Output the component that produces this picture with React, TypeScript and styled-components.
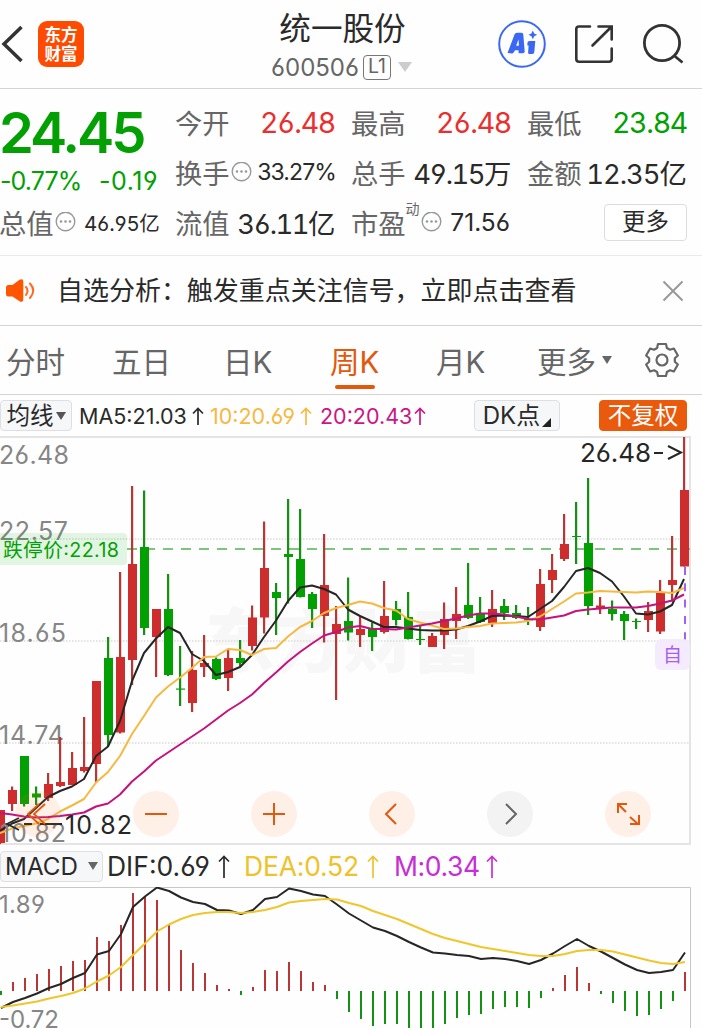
import React from 'react';
import styled, { createGlobalStyle } from 'styled-components';

const RED = '#cd2d2d';
const GREEN = '#03a003';
const ORANGE = '#e2590d';
const FONT = `Inter, "Noto Sans CJK SC", sans-serif`;

const GlobalStyle = createGlobalStyle`
  * { box-sizing: border-box; }
  body {
    margin: 0;
    background: #fff;
    font-family: ${FONT};
    font-feature-settings: "cv03", "cv04";
    color: #2a2a2a;
    overflow: hidden;
  }
`;

const Screen = styled.main`
  width: 702px;
  height: 1028px;
  overflow: hidden;
  background: #fefefe;
  display: flex;
  flex-direction: column;
`;

/* ---------- header ---------- */
const Header = styled.header`
  height: 89px;
  flex: none;
  display: grid;
  grid-template-columns: 240px 1fr 240px;
  border-bottom: 1px solid #d4d4d4;
`;
const HeaderLeft = styled.div`
  display: flex;
  align-items: center;
  gap: 13px;
  padding-left: 1px;
`;
const AppLogo = styled.div`
  width: 46px;
  height: 46px;
  border-radius: 9px;
  background: #ff4b02;
  color: #fff;
  font: 700 16.5px/19px "Noto Sans CJK SC", sans-serif;
  text-align: center;
  padding-top: 4px;
`;
const HeaderTitle = styled.div`
  display: flex;
  flex-direction: column;
  align-items: center;
  padding: 9px 17px 0 0;
`;
const StockName = styled.h1`
  margin: 0;
  font-size: 31.6px;
  line-height: 40px;
  font-weight: 400;
  white-space: nowrap;
`;
const CodeRow = styled.div`
  display: flex;
  align-items: center;
  height: 36px;
  margin-right: 2px;
  color: #666;
  font-size: 24px;
`;
const LevelTag = styled.span`
  width: 28px;
  height: 25px;
  margin: 0 7px 0 4px;
  border: 1.5px solid #777;
  border-radius: 4px;
  font-size: 19.5px;
  line-height: 21px;
  text-align: center;
`;
const Caret = styled.i<{ $w: number; $h: number; $color: string; $gap?: number }>`
  width: 0;
  height: 0;
  margin-left: ${p => p.$gap ?? 0}px;
  border-left: ${p => p.$w / 2}px solid transparent;
  border-right: ${p => p.$w / 2}px solid transparent;
  border-top: ${p => p.$h}px solid ${p => p.$color};
`;
const HeaderActions = styled.div`
  display: flex;
  align-items: center;
  justify-content: flex-end;
  gap: 28px;
  padding-right: 18px;
`;

/* ---------- quote ---------- */
const Quote = styled.section`
  height: 167px;
  flex: none;
  display: grid;
  grid-template-columns: 158px 158px 158px 158px;
  grid-template-rows: 50px 50px 50px;
  column-gap: 18px;
  padding-top: 8px;
  border-bottom: 1px solid #e9e9e9;
`;
const PriceBlock = styled.div`
  grid-row: span 2;
  color: ${GREEN};
`;
const Price = styled.div`
  font-size: 56px;
  line-height: 68px;
  font-weight: 600;
  letter-spacing: -3.1px;
  margin: 2px 0 0 -1px;
`;
const Change = styled.div`
  display: flex;
  justify-content: space-between;
  font-size: 25px;
  line-height: 28px;
  letter-spacing: -0.9px;
`;
const ChangeValue = styled.span`
  letter-spacing: 0.5px;
`;
const Cell = styled.div`
  display: flex;
  align-items: center;
  justify-content: space-between;
  white-space: nowrap;
`;
const Label = styled.span`
  display: flex;
  align-items: center;
  margin-left: -1px;
  font-size: 27.3px;
  color: #666;
`;
const Sup = styled.sup`
  font-size: 14px;
  line-height: 14px;
  align-self: flex-start;
`;
const Value = styled.span<{ $size?: number; $color?: string; $ls?: number; $shift?: number; $prop?: boolean }>`
  font-size: ${p => p.$size ?? 28.5}px;
  font-variant-numeric: ${p => (p.$prop ? 'normal' : 'tabular-nums')};
  color: ${p => p.$color ?? '#2a2a2a'};
  letter-spacing: ${p => p.$ls ?? -1.3}px;
  margin-right: ${p => p.$shift ?? -1}px;
`;
const MoreButton = styled.button`
  justify-self: end;
  align-self: center;
  width: 83px;
  height: 37px;
  margin-right: -1px;
  padding: 0 0 2px;
  border: 1px solid #ddd;
  border-radius: 4px;
  background: #fff;
  font: 400 23.5px/33px ${FONT};
  color: #2a2a2a;
`;

/* ---------- notice ---------- */
const Notice = styled.section`
  height: 70px;
  flex: none;
  display: flex;
  align-items: center;
  border-bottom: 1px solid #d4d4d4;
  padding: 0 18px 0 5px;
`;
const NoticeText = styled.p`
  flex: 1;
  margin: 0 0 0 21px;
  font-size: 25.98px;
  line-height: 36px;
  white-space: nowrap;
`;

/* ---------- period tabs ---------- */
const Tabs = styled.nav`
  height: 69px;
  flex: none;
  display: flex;
  align-items: center;
  border-bottom: 1px solid #d4d4d4;
  padding-left: 6px;
`;
const Tab = styled.div<{ $active?: boolean; $w: number }>`
  position: relative;
  width: ${p => p.$w}px;
  height: 68px;
  display: flex;
  align-items: center;
  font-size: 29.5px;
  padding-bottom: 1px;
  color: ${p => (p.$active ? ORANGE : '#666')};
  white-space: nowrap;
`;
const TabBar = styled.span`
  position: absolute;
  left: 5px;
  bottom: 5px;
  width: 40px;
  height: 4px;
  border-radius: 2px;
  background: ${ORANGE};
`;

/* ---------- indicator bars ---------- */
const IndicatorBar = styled.div<{ $h: number }>`
  height: ${p => p.$h}px;
  flex: none;
  display: flex;
  align-items: center;
  white-space: nowrap;
`;
const Chip = styled.span<{ $w: number; $size: number; $solid?: boolean; $before?: number; $after?: number }>`
  width: ${p => p.$w}px;
  height: 31px;
  margin: 0 ${p => p.$after ?? 0}px 0 ${p => p.$before ?? 0}px;
  display: flex;
  align-items: center;
  justify-content: center;
  gap: 2px;
  border-radius: 4px;
  border: 1px solid ${p => (p.$solid ? '#ea5a0c' : '#dedfe3')};
  background: ${p => (p.$solid ? '#ea5a0c' : '#f6f7f9')};
  color: ${p => (p.$solid ? '#fff' : '#2a2a2a')};
  font-size: ${p => p.$size}px;
  line-height: 29px;
`;
const Reading = styled.span<{ $color: string; $size: number; $w: number; $ls?: number; $gap?: number }>`
  width: ${p => p.$w}px;
  display: flex;
  align-items: center;
  gap: ${p => p.$gap ?? 5}px;
  color: ${p => p.$color};
  font-size: ${p => p.$size}px;
  letter-spacing: ${p => p.$ls ?? 0}px;
`;

/* ---------- charts ---------- */
const KPanel = styled.section`
  position: relative;
  width: 702px;
  height: 409px;
  flex: none;
`;
const MacdPanel = styled.section`
  width: 702px;
  height: 141px;
  flex: none;
`;
const ChartSvg = styled.svg`
  display: block;
  font-family: ${FONT};
`;
const ChartControls = styled.div`
  position: absolute;
  left: 133px;
  top: 355px;
  display: flex;
  gap: 72px;
`;
const RoundButton = styled.span<{ $muted?: boolean }>`
  width: 46px;
  height: 46px;
  border-radius: 50%;
  background: ${p => (p.$muted ? '#f3f3f3' : 'rgba(255, 107, 30, 0.1)')};
  color: ${p => (p.$muted ? '#666' : ORANGE)};
`;

/* ---------- icons ---------- */
const BackIcon = () => (
  <svg width="24" height="40" viewBox="0 0 24 40" fill="none" stroke="#333" strokeWidth="3.500">
    <path d="M20.500 3L3 20L20.500 37" />
  </svg>
);
const AiIcon = () => (
  <svg width="48" height="48" viewBox="0 0 48 48">
    <circle cx="24" cy="24" r="22.800" fill="none" stroke="#3b68f3" strokeWidth="2" />
    <g fill="#3b68f3">
      <path fillRule="evenodd" d="M9.500 33Q13.500 22.500 16.500 14.500Q17 12.800 19 12.800H23.500Q25.200 12.800 25.300 14.500L26.700 31.500Q26.700 33.300 25 33.300H21.500Q20.500 33.300 20.500 32V30.300H17L15.500 32.800Q15 33.500 14 33.500ZM20.500 19.300L18.200 25.700H20.900Z" />
      <path d="M31.500 21H37.300L36.300 32Q36 34 34.500 34H31.500Q30 34 30.100 32.500L30.600 25.500H29.300L29.500 22.500Q29.700 21 31.500 21Z" />
      <path d="M34.800 10.500L36.200 13.600L39.200 14.800L36.200 16.200L34.800 19.200L33.400 16.200L30.500 14.800L33.400 13.600Z" />
    </g>
  </svg>
);
const ShareIcon = () => (
  <svg width="40" height="40" viewBox="0 0 40 40" fill="none" stroke="#333" strokeWidth="2.600" strokeLinecap="round">
    <path d="M16 2.500H5Q2.300 2.500 2.300 5V35Q2.300 37.700 5 37.700H35Q37.700 37.700 37.700 35V24.500" />
    <path d="M24.500 2.500H37.700V15.500M37.200 3L18.500 21.500" />
  </svg>
);
const SearchIcon = () => (
  <svg width="42" height="42" viewBox="0 0 42 42" fill="none" stroke="#333" strokeWidth="2.800">
    <circle cx="20" cy="20" r="17.600" />
    <path d="M32 32.500L40.500 39.500" />
  </svg>
);
const InfoDots = () => (
  <svg width="22" height="21" viewBox="-1 0 22 21">
    <circle cx="10.500" cy="9.500" r="9.300" fill="none" stroke="#999" strokeWidth="1.400" />
    <g fill="#999">
      <circle cx="6" cy="9.500" r="1.300" />
      <circle cx="10.500" cy="9.500" r="1.300" />
      <circle cx="15" cy="9.500" r="1.300" />
    </g>
  </svg>
);
const SpeakerIcon = () => (
  <svg width="31" height="26" viewBox="0 0 31 26">
    <path fill="#ff5500" d="M3 7H7.500L14.500 1.800Q18.300 0 18.300 3.500V21.500Q18.300 25 14.500 23.200L7.500 18.500H3Q1 18.500 1 16V9.500Q1 7 3 7Z" />
    <g fill="none" stroke="#ff6a20" strokeWidth="2" strokeLinecap="round">
      <path d="M21 9Q24 12.500 21 17" />
      <path d="M25 5.500Q31.500 12.500 25 20" />
    </g>
  </svg>
);
const CloseIcon = () => (
  <svg width="22" height="22" viewBox="0 0 22 22" stroke="#999" strokeWidth="2">
    <path d="M1.500 1.500L20.500 20.500M20.500 1.500L1.500 20.500" />
  </svg>
);

/* Six teeth, one every 60 degrees: base, tip, tip, base. */
const gearOutline = [0, 1, 2, 3, 4, 5]
  .flatMap(k =>
    [[-4.9, -12], [-4, -16], [4, -16], [4.9, -12]].map(([x, y]) => {
      const a = (k * Math.PI) / 3;
      return `${(x * Math.cos(a) - y * Math.sin(a)).toFixed(2)},${(x * Math.sin(a) + y * Math.cos(a)).toFixed(2)}`;
    }),
  )
  .join(' ');
const GearIcon = () => (
  <svg width="36" height="36" viewBox="-18 -18 36 36" fill="none" stroke="#666" strokeWidth="2.200" strokeLinejoin="round">
    <polygon points={gearOutline} />
    <circle r="5.500" />
  </svg>
);
const UpArrow = ({ h = 18 }: { h?: number }) => (
  <svg width="12" height={h} viewBox={`0 0 12 ${h}`} fill="none" stroke="currentColor" strokeWidth="1.700">
    <path d={`M6 ${h}V1.500M1 6.500L6 1.500L11 6.500`} />
  </svg>
);
const ControlIcon = ({ d }: { d: string }) => (
  <svg width="46" height="46" viewBox="0 0 46 46" fill="none" stroke="currentColor" strokeWidth="2">
    <path d={d} />
  </svg>
);

/* ---------- data: [up, high, body top, body bottom, low] ---------- */
const candles: [number, number, number, number, number][] = [
  [1, 810, 810, 843, 844], [1, 786.5, 790, 804, 811], [0, 756, 756, 804, 806.5], [0, 786.5, 793.5, 797.5, 805],
  [1, 773, 784, 798, 801], [1, 737, 782, 786, 787], [1, 752, 768, 785, 785], [1, 717, 767, 771, 772.5],
  [1, 681, 681, 764, 783], [0, 637, 658, 735, 746], [1, 572, 657, 732.5, 733.5], [1, 486, 564, 660, 685],
  [0, 490.5, 547, 628, 635], [1, 609, 609, 637, 677], [0, 574, 609, 675, 676], [0, 646, 688.5, 689.7, 706],
  [1, 651, 670, 703, 712], [1, 635, 663, 667, 677], [0, 657.5, 659, 679, 680], [1, 649.5, 658, 678, 691],
  [0, 640, 658, 663, 666.5], [1, 605.5, 617.5, 646, 650.5], [1, 521.5, 568, 617.5, 633.5], [0, 583, 592, 598, 635],
  [0, 499, 554, 557, 603.5], [0, 509, 559, 597, 597.5], [0, 592, 594, 609, 628], [1, 534, 585, 616, 642.5],
  [1, 606, 624, 634, 700], [0, 577.5, 621, 632.5, 640.5], [1, 616.5, 629, 635, 647], [0, 622.5, 629, 637, 651],
  [1, 581, 616, 632, 633.5], [0, 601, 609, 620, 625.5], [0, 592, 617, 639, 639.5], [0, 625.5, 639, 640, 645],
  [1, 633, 636, 647, 647], [1, 602.5, 619, 635, 649], [1, 587, 614, 621, 639], [0, 563, 605, 618, 619],
  [0, 597, 613, 622, 623], [1, 590, 609, 623, 627], [0, 599, 606, 613, 620], [0, 605, 613, 618, 619],
  [0, 607, 619, 620.5, 625], [1, 569, 584, 627, 631], [1, 554, 570, 580, 593], [1, 514, 544, 559, 561],
  [0, 502, 536, 537, 564], [0, 478, 543, 606, 615], [1, 597, 605.5, 608.5, 614], [0, 600.5, 609, 614, 620.5],
  [0, 611, 614, 621, 640], [0, 618.5, 621, 622, 629], [1, 602, 611, 620, 632], [1, 580, 593, 631.5, 634],
  [1, 536, 580, 585, 601.5], [1, 437, 490, 566.5, 566.5],
];
const ma5 = [831, 823.5, 819, 808, 797, 791, 786.5, 779, 756, 746.5, 721, 681, 653, 638.5, 627, 633, 654, 661, 675, 672, 667, 655, 637, 620.5, 601, 587.5, 585.5, 589, 594.5, 609.5, 616, 621.5, 627, 627, 628.5, 630, 630.5, 630.5, 629.5, 626, 621.5, 616, 615.5, 616, 617, 609, 601, 587, 571, 568, 573, 581.5, 596.5, 613.5, 614.5, 611.5, 605, 579];
const ma10 = [833, 828.5, 826, 823.5, 819, 811.5, 805.5, 799, 782.5, 772, 756, 734, 716, 697.5, 686.5, 677.5, 668, 657, 656.5, 649, 650, 655, 649, 648, 636.5, 627, 621, 613, 608, 605, 601.5, 603.5, 608, 610.5, 619, 622.5, 625.5, 629, 628.5, 627, 626, 623.5, 623, 622.5, 621, 616.5, 609, 601.5, 593.5, 592.5, 591, 591.5, 592, 592.5, 591.5, 592, 593, 588];
const ma20 = [813, 814.5, 816.5, 817.5, 817, 816, 814.5, 812.5, 806.5, 803.5, 794.5, 781.5, 771.5, 760.5, 752.5, 744.5, 736.5, 728.5, 719.5, 710.5, 703, 694.5, 683, 672.5, 661.5, 652, 643.5, 635.5, 632, 627.5, 626, 629, 629, 629.5, 627.5, 625.5, 623.5, 621, 618.5, 615.5, 613.5, 613.5, 614.5, 616.5, 619, 619.5, 617.5, 615.5, 611, 609.5, 608.5, 607.5, 607.5, 607.5, 606, 603.5, 600.5, 594.5];
const hist = [995, 982, 978, 974, 969, 966, 961, 960, 937, 941, 925, 893, 897, 900, 925, 950, 963, 973, 985, 989, 995, 987, 970, 971, 962, 971, 982, 985, 999, 1012, 1019, 1026, 1024, 1024, 1030, 1032, 1031, 1024, 1018, 1015, 1014, 1009, 1007, 1007, 1008, 998, 988, 975, 967, 983, 994, 1003, 1011, 1016, 1015, 1009, 1001, 972];
const dif = [1008, 1002, 998, 993.5, 988, 984, 978, 973, 954.5, 951, 934, 907, 896.5, 887.5, 891, 897.5, 902, 904, 910, 910.5, 914, 910, 899, 897, 888.5, 891, 894.5, 896, 904.5, 913.5, 920.5, 927.5, 931, 936, 942, 947.5, 952.5, 953.5, 955, 956, 959, 958, 959, 961, 964, 960, 953.5, 946, 939, 946, 951.5, 958, 964.5, 970, 973, 972, 970, 952.5];
const dea = [1007, 1005.5, 1003.5, 1001.5, 998.5, 996, 993, 988.5, 981.5, 975.5, 967, 955, 943.5, 931.5, 924.5, 919, 915, 913, 912, 912, 913, 912, 910, 907, 902.5, 901, 900, 899, 899.5, 903, 906, 911, 915, 919, 924, 929, 934, 938, 941, 944, 947, 949, 951, 953, 955, 956, 956, 954, 951, 950, 950, 951.5, 954.5, 957.5, 960.5, 963, 964, 962];

const line = (ys: number[], dx: number) => ys.map((y, i) => `${i * 12 + dx},${y}`).join(' ');

const KChart = () => (
  <ChartSvg width="702" height="409" viewBox="0 436 702 409">
    <g fontFamily='"Noto Sans CJK SC", sans-serif' fontWeight="900" fontSize="70" fill="#f7f7f7">
      <text x="205" y="667" textLength="277">东方财富</text>
    </g>
    <g stroke="#dcdcdc" strokeWidth="1.500" strokeDasharray="1.500 1.500">
      <path d="M0 539H689M0 641H689M0 743H689" />
    </g>
    <path d="M0 437H690V844H0" fill="none" stroke="#e4e4e4" strokeWidth="2" />
    <g fill="#868686" fontSize="25">
      <text x="-1" y="464" textLength="70">26.48</text>
      <text x="-1" y="540" textLength="69">22.57</text>
      <text x="-1" y="642" textLength="67">18.65</text>
      <text x="-1" y="744" textLength="65">14.74</text>
    </g>
    <path d="M127 549H690" stroke="#7cc67c" strokeWidth="2" strokeDasharray="10 8" />
    <path d="M0 533H123Q127 533 127 537V561Q127 565 123 565H0Z" fill="#03a003" fillOpacity="0.11" />
    <text x="3" y="557" fontSize="19.700" fill={GREEN} textLength="116">跌停价:22.18</text>
    {candles.map(([up, hi, a, b, lo], i) => (
      <g key={i} fill={up ? RED : GREEN}>
        <rect x={i * 12 - 1} y={hi} width="2.200" height={lo - hi} fill={up ? '#b93636' : '#129112'} />
        <rect x={i * 12 - 4} y={a} width="9" height={b - a} />
      </g>
    ))}
    <g fill="none" strokeWidth="2" strokeLinejoin="round">
      <polyline points={line(ma5, 0)} stroke="#262626" />
      <polyline points={line(ma10, 0)} stroke="#f5b941" />
      <polyline points={line(ma20, 0)} stroke="#c4127e" />
    </g>
    <text x="0" y="842" fontSize="25" fill="#868686" textLength="66">10.82</text>
    <path d="M19 818L7 824L19 830M24 824H32M40 824H62" fill="none" stroke="#262626" strokeWidth="1.800" />
    <text x="65" y="834" fontSize="25" fill="#262626" textLength="67">10.82</text>
    <circle cx="38" cy="814" r="23" fill="#ff6b1e" fillOpacity="0.1" />
    <path d="M39 804L28 814L39 824M45 804L34 814L45 824" fill="none" stroke={ORANGE} strokeWidth="1.800" />
    <text x="580" y="462" fontSize="26" fill="#262626" textLength="71">26.48</text>
    <path d="M654 453H663M668 446L681 452.500L668 459" fill="none" stroke="#262626" strokeWidth="2" />
    <path d="M685 567V640" stroke="#a75ff0" strokeWidth="2" strokeDasharray="8 8.300" />
    <rect x="655" y="639" width="35" height="31" rx="6" fill="#f3eafe" fillOpacity="0.9" />
    <text x="663" y="662" fontSize="19" fill="#a75ff0">自</text>
  </ChartSvg>
);

const MacdChart = () => (
  <ChartSvg width="702" height="141" viewBox="0 887 702 141">
    <path d="M0 887.500H690.500V1028" fill="none" stroke="#c8c8c8" />
    <g fill="#868686" fontSize="24">
      <text x="-1" y="913" textLength="46">1.89</text>
      <text x="-1" y="1028" textLength="60">-0.72</text>
    </g>
    {hist.map((y, i) => (
      <rect key={i} x={i * 12} y={Math.min(y, 991)} width="2" height={Math.abs(y - 991)} fill={y < 991 ? '#b93636' : '#129112'} />
    ))}
    <g fill="none" strokeWidth="2" strokeLinejoin="round">
      <polyline points={line(dif, 1)} stroke="#262626" />
      <polyline points={line(dea, 1)} stroke="#efc62c" />
    </g>
  </ChartSvg>
);

export default function App() {
  return (
    <Screen>
      <GlobalStyle />
      <Header>
        <HeaderLeft>
          <BackIcon />
          <AppLogo>东方<br />财富</AppLogo>
        </HeaderLeft>
        <HeaderTitle>
          <StockName>统一股份</StockName>
          <CodeRow>
            600506
            <LevelTag>L1</LevelTag>
            <Caret $w={14} $h={10} $color="#ccc" />
          </CodeRow>
        </HeaderTitle>
        <HeaderActions>
          <AiIcon />
          <ShareIcon />
          <SearchIcon />
        </HeaderActions>
      </Header>

      <Quote>
        <PriceBlock>
          <Price>24.45</Price>
          <Change><span>-0.77%</span><ChangeValue>-0.19</ChangeValue></Change>
        </PriceBlock>
        <Cell><Label>今开</Label><Value $color="#e8302f">26.48</Value></Cell>
        <Cell><Label>最高</Label><Value $color="#e8302f">26.48</Value></Cell>
        <Cell><Label>最低</Label><Value $color={GREEN}>23.84</Value></Cell>
        <Cell><Label>换手<InfoDots /></Label><Value $size={23} $ls={-0.9} $shift={-2} $prop>33.27%</Value></Cell>
        <Cell><Label>总手</Label><Value $size={27.4} $ls={-1.5} $shift={0}>49.15万</Value></Cell>
        <Cell><Label>金额</Label><Value $size={27.4} $ls={-1} $shift={0}>12.35亿</Value></Cell>
        <Cell><Label>总值<InfoDots /></Label><Value $size={20.5} $ls={-0.7}>46.95亿</Value></Cell>
        <Cell><Label>流值</Label><Value $size={27.4} $ls={-1.5} $shift={0}>36.11亿</Value></Cell>
        <Cell><Label>市盈<Sup>动</Sup><InfoDots /></Label><Value $size={24.5} $ls={0} $shift={0} $prop>71.56</Value></Cell>
        <MoreButton>更多</MoreButton>
      </Quote>

      <Notice>
        <SpeakerIcon />
        <NoticeText>自选分析：触发重点关注信号，立即点击查看</NoticeText>
        <CloseIcon />
      </Notice>

      <Tabs>
        <Tab $w={106}>分时</Tab>
        <Tab $w={111}>五日</Tab>
        <Tab $w={107}>日K</Tab>
        <Tab $w={106} $active>周K<TabBar /></Tab>
        <Tab $w={101}>月K</Tab>
        <Tab $w={107}>更多<Caret $w={10} $h={8} $color="#666" $gap={6} /></Tab>
        <GearIcon />
      </Tabs>

      <IndicatorBar $h={41}>
        <Chip $w={72} $size={23.5} $after={7}>均线<Caret $w={10} $h={8} $color="#555" /></Chip>
        <Reading $color="#2a2a2a" $size={21.5} $w={131}>MA5:21.03<UpArrow /></Reading>
        <Reading $color="#f5b941" $size={21.5} $w={110}>10:20.69<UpArrow /></Reading>
        <Reading $color="#cb1685" $size={21.5} $w={154} $gap={2}>20:20.43<UpArrow /></Reading>
        <Chip $w={86} $size={24} $after={39}>
          DK点
          <svg width="9" height="24" viewBox="0 0 9 24"><path d="M9 14V23H0Z" fill="#222" /></svg>
        </Chip>
        <Chip $w={88} $size={23.5} $solid>不复权</Chip>
      </IndicatorBar>

      <KPanel>
        <KChart />
        <ChartControls>
          <RoundButton><ControlIcon d="M12 23H34" /></RoundButton>
          <RoundButton><ControlIcon d="M12 23H34M23 12V34" /></RoundButton>
          <RoundButton><ControlIcon d="M27 13L17 23L27 33" /></RoundButton>
          <RoundButton $muted><ControlIcon d="M19 13L29 23L19 33" /></RoundButton>
          <RoundButton><ControlIcon d="M22 13H13V22M13 13L21 21M25 26L33 33M34 24V33H25" /></RoundButton>
        </ChartControls>
      </KPanel>

      <IndicatorBar $h={42}>
        <Chip $w={103} $size={24.2} $after={4}>MACD<Caret $w={10} $h={8} $color="#666" $gap={8} /></Chip>
        <Reading $color="#2a2a2a" $size={26.5} $w={137} $gap={8}>DIF:0.69<UpArrow h={23} /></Reading>
        <Reading $color="#efc22a" $size={26.5} $w={150} $gap={8} $ls={-0.2}>DEA:0.52<UpArrow h={23} /></Reading>
        <Reading $color="#c62fd4" $size={26.5} $w={120} $gap={6} $ls={-0.4}>M:0.34<UpArrow h={23} /></Reading>
      </IndicatorBar>

      <MacdPanel>
        <MacdChart />
      </MacdPanel>
    </Screen>
  );
}
